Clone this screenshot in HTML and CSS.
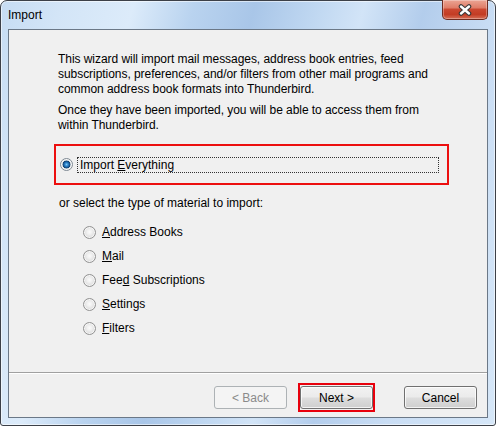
FILE: index.html
```html
<!DOCTYPE html>
<html>
<head>
<meta charset="utf-8">
<title>Import</title>
<link rel="stylesheet" href="styles.css">
</head>
<body>
<div class="window">
  <div class="titlebar">
    <span class="title">Import</span>
    <div class="close">
      <svg width="14" height="12" viewBox="0 0 14 12">
        <path d="M3 2.5 L11 9.5 M11 2.5 L3 9.5" stroke="#3a3a3a" stroke-width="4.6" stroke-linecap="round" fill="none"/>
        <path d="M3 2.5 L11 9.5 M11 2.5 L3 9.5" stroke="#ffffff" stroke-width="2.4" stroke-linecap="round" fill="none"/>
      </svg>
    </div>
  </div>
  <div class="client">
    <div class="content">
      <p class="intro">This wizard will import mail messages, address book entries, feed<br>subscriptions, preferences, and/or filters from other mail programs and<br>common address book formats into Thunderbird.</p>
      <p class="intro second">Once they have been imported, you will be able to access them from<br>within Thunderbird.</p>
      <div class="highlight">
        <span class="radio checked"></span>
        <span class="focus">Import <u>E</u>verything</span>
      </div>
      <p class="prompt">or select the type of material to import:</p>
      <ul class="choices">
        <li class="choice"><span class="radio"></span><span><u>A</u>ddress Books</span></li>
        <li class="choice"><span class="radio"></span><span><u>M</u>ail</span></li>
        <li class="choice"><span class="radio"></span><span>Fee<u>d</u> Subscriptions</span></li>
        <li class="choice"><span class="radio"></span><span><u>S</u>ettings</span></li>
        <li class="choice"><span class="radio"></span><span><u>F</u>ilters</span></li>
      </ul>
    </div>
    <div class="separator"></div>
    <div class="footer">
      <button class="btn" disabled>&lt; Back</button>
      <span class="next-frame"><button class="btn">Next &gt;</button></span>
      <button class="btn cancel">Cancel</button>
    </div>
  </div>
</div>
</body>
</html>
```
FILE: styles.css
```css
html, body {
  margin: 0;
  padding: 0;
}
body {
  font-family: "Liberation Sans", Arial, sans-serif;
  font-size: 12px;
  color: #000;
  background: #ffffff;
}
.window {
  box-sizing: border-box;
  width: 496px;
  height: 426px;
  border: 1px solid #3c4048;
  border-radius: 7px 7px 3px 3px;
  background: linear-gradient(105deg, #c6dcf3 0%, #d3e5f7 10%, #dcebfa 22%, #b9d3ef 32%, #a9c6e8 42%, #bfd7f1 52%, #d2e4f7 60%, #b3cdec 70%, #c9ddf4 82%, #d6e7f8 100%);
  box-shadow: inset 0 0 0 1px rgba(255, 255, 255, 0.55);
  display: flex;
  flex-direction: column;
}
.titlebar {
  height: 28px;
  flex: none;
  display: flex;
  align-items: center;
  padding-left: 7px;
  padding-right: 7px;
}
.title {
  font-size: 12px;
  color: #000;
}
.close {
  margin-left: auto;
  align-self: flex-start;
  margin-top: -1px;
  box-sizing: border-box;
  width: 46px;
  height: 20px;
  border: 1px solid #6e2c22;
  border-top: none;
  border-radius: 0 0 5px 5px;
  background: linear-gradient(#eba594 0%, #e07e69 40%, #cb4730 50%, #c33c24 76%, #d66f57 100%);
  box-shadow: inset 0 0 0 1px rgba(255, 255, 255, 0.3);
  display: flex;
  align-items: center;
  justify-content: center;
}
.client {
  flex: 1;
  margin: 0 7px 7px 7px;
  border: 1px solid #6b7887;
  background: #f0f0f0;
  display: flex;
  flex-direction: column;
}
.content {
  flex: 1;
  padding: 22px 0 0 49px;
}
.intro {
  margin: 0;
  line-height: 15px;
  white-space: nowrap;
  letter-spacing: -0.05px;
}
.intro.second {
  margin-top: 6px;
}
.highlight {
  box-sizing: border-box;
  width: 395px;
  height: 41px;
  margin: 11px 0 0 -4px;
  border: 2px solid #ec0f0f;
  display: flex;
  align-items: center;
  padding-left: 4px;
  gap: 4px;
}
.focus {
  box-sizing: border-box;
  width: 362px;
  height: 16px;
  line-height: 14px;
  padding-left: 2px;
  border: 1px dotted #333;
}
.prompt {
  margin: 11px 0 0 1px;
  line-height: 15px;
}
.choices {
  list-style: none;
  margin: 9px 0 0 25px;
  padding: 0;
}
.choice {
  height: 24px;
  display: flex;
  align-items: center;
  gap: 6px;
}
.radio {
  flex: none;
  box-sizing: border-box;
  width: 13px;
  height: 13px;
  border-radius: 50%;
  border: 1px solid #929292;
  background: radial-gradient(circle at 50% 45%, #fbfbfb 0, #f0f0f0 30%, #d9d9d9 75%, #cfcfcf 100%);
  box-shadow: inset 0 0 0 1px rgba(255, 255, 255, 0.7);
}
.radio.checked {
  border-color: #7f8a94;
  background: radial-gradient(circle at 50% 50%, #7fc8f5 0, #2f86cc 1.6px, #1a5f9e 2.8px, #103f6e 3.6px, #cfd4d8 4.2px, #f2f2f2 5.5px);
}
u {
  text-decoration: underline;
  text-underline-offset: 1px;
}
.separator {
  height: 0;
  border-top: 1px solid #a0a0a0;
  border-bottom: 1px solid #ffffff;
}
.footer {
  height: 43px;
  box-sizing: border-box;
  display: flex;
  justify-content: flex-end;
  align-items: center;
  padding: 4px 10px 0 0;
}
.btn {
  box-sizing: border-box;
  width: 73px;
  height: 23px;
  padding: 0;
  font-family: "Liberation Sans", Arial, sans-serif;
  font-size: 12px;
  color: #000;
  border: 1px solid #707070;
  border-radius: 3px;
  background: linear-gradient(#f2f2f2 0%, #ebebeb 48%, #dddddd 52%, #cfcfcf 100%);
  box-shadow: inset 0 0 0 1px rgba(255, 255, 255, 0.75);
  display: block;
}
.btn:disabled {
  color: #8a8a8a;
  border-color: #adb2b5;
  background: #f4f4f4;
  box-shadow: none;
}
.next-frame {
  margin-left: 11px;
  border: 2px solid #e8000c;
  padding: 1px 0;
  display: block;
}
.cancel {
  margin-left: 29px;
}
```
